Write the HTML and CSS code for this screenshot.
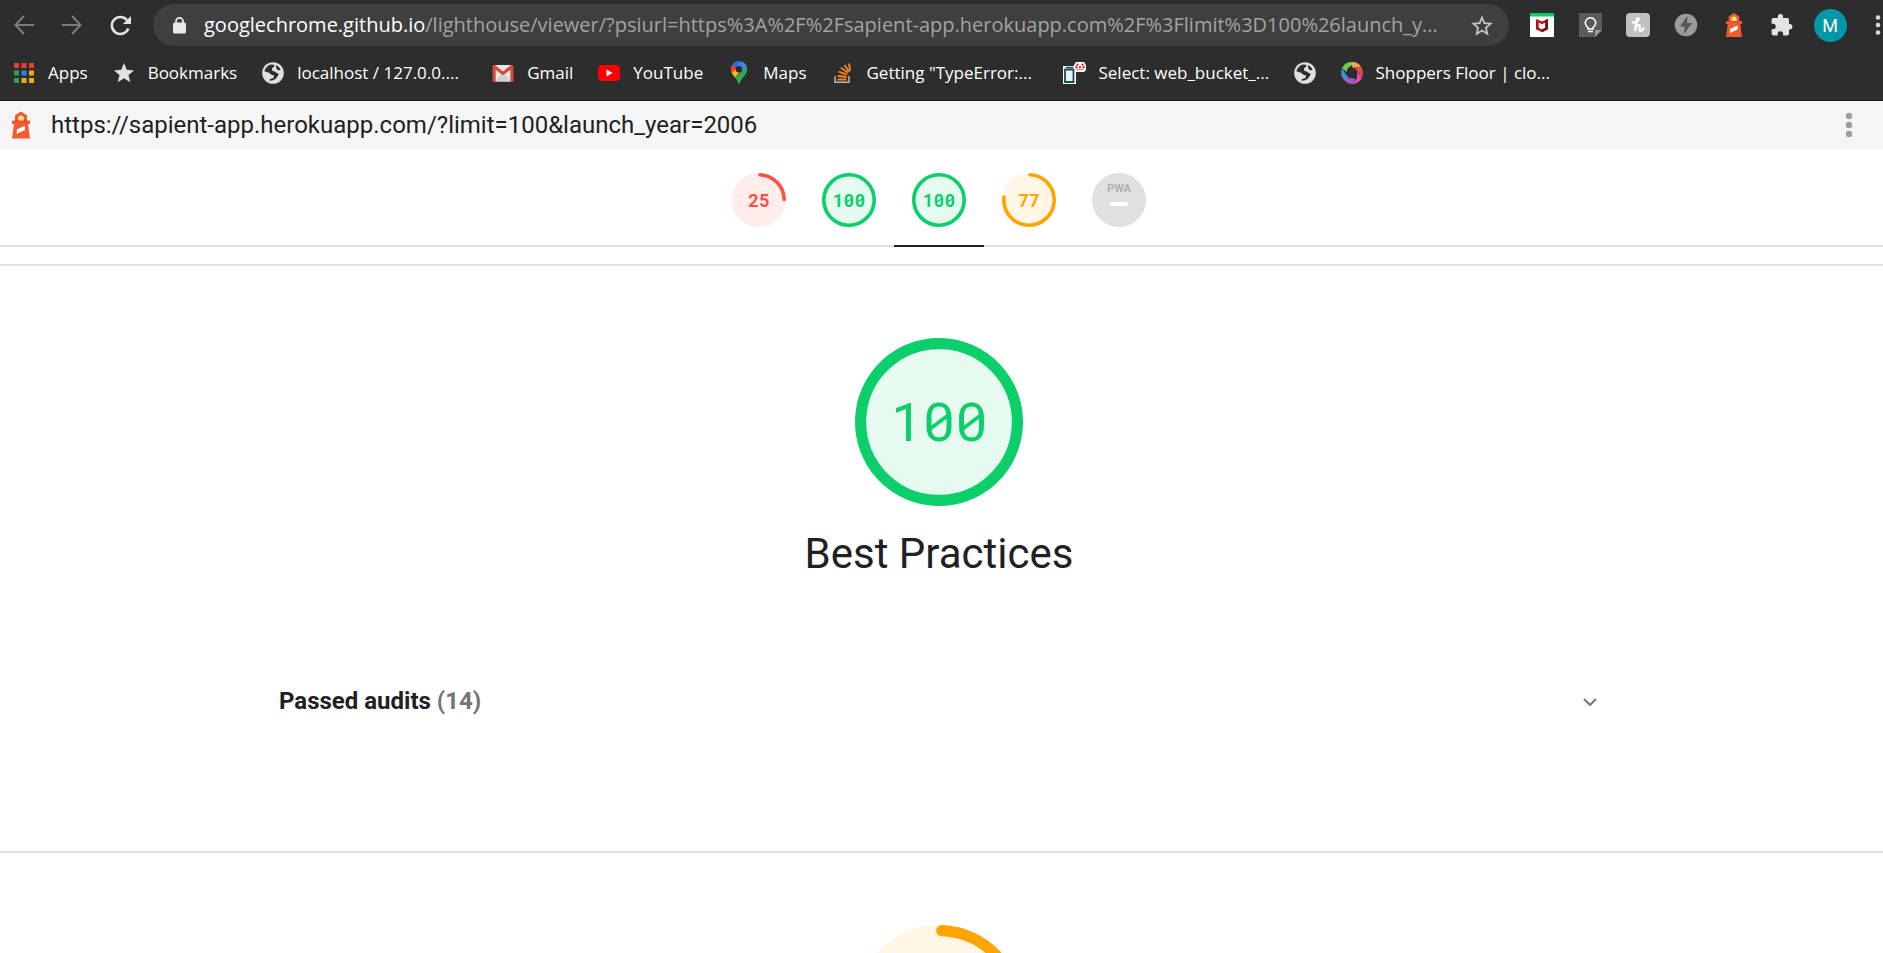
FILE: index.html
```html
<!DOCTYPE html>
<html lang="en">
<head>
<meta charset="utf-8">
<title>Lighthouse Report Viewer</title>
<link rel="stylesheet" href="styles.css">
</head>
<body>
<svg class="defs" aria-hidden="true">
  <symbol id="lighthouse" viewBox="0 0 18 27">
    <path fill="#f4592f" d="M9 0l6 3.8V9h3v3.4h-2L18 27H0l2-14.6H0V9h3V3.8z"/>
    <path fill="#e8431f" d="M3 8.8h12v1.2H3z"/>
    <path fill="#fde37a" d="M6 9V6.5C6 5 7.4 4 9 4s3 1 3 2.500V9z"/>
    <path fill="#fff" d="M5 17.800l8-3.600v4.300l-8.500 4z"/>
  </symbol>
  <symbol id="globe" viewBox="0 0 22 22">
    <circle cx="11" cy="11" r="10.800" fill="#dfe0e1"/>
    <path fill="#2d2d2d" d="M2.500 9.500C3 6 6 2.800 9.500 2.400l3 .6c-.3 1.800-1 2.600-2.400 2.900v2.400c0 .7 1 1 1.800 1 1.500 0 1.600 1.600 2.800 1.600 2 0 2.200 2 1 3.200-1 1-1.200 2.500-2.700 3.200-2 .9-4.500 1.800-6.200.9l2-1.500c2-.1 3-1 3.200-2.300.1-.9-.8-1.500-1.800-1.500-2 0-2.200-1.900-3.900-2.300C5 10.300 4 9.200 2.500 9.500z"/>
    <path fill="#2d2d2d" d="M14 3.300c2 .8 3.800 2.400 4.600 4.400-1.400 1-3 .8-3.600-.4-.5-1.200-1.400-1.900-1-4z"/>
  </symbol>
</svg>

<header class="browser">
  <div class="toolbar">
    <button class="slot dim" aria-label="Back"><svg width="20" height="20" viewBox="0 0 20 20"><path fill="none" stroke="currentColor" stroke-width="2" d="M20 10H1.500M10 1L1.500 10l8.500 9"/></svg></button>
    <button class="slot dim" aria-label="Forward"><svg width="20" height="20" viewBox="0 0 20 20"><path fill="none" stroke="currentColor" stroke-width="2" d="M0 10h18.500M10 1l8.500 9-8.500 9"/></svg></button>
    <button class="slot" aria-label="Reload"><svg width="21" height="21" viewBox="0 0 21 21"><path fill="none" stroke="currentColor" stroke-width="2.600" d="M17 5.200A8.500 8.500 0 1 0 18.300 13.500"/><path fill="currentColor" d="M21 1v8h-8z"/></svg></button>
    <div class="address">
      <svg class="lock" width="13" height="17" viewBox="0 0 13 17"><rect x="0" y="5.500" width="13" height="11" rx="1.500" fill="#e8e8e8"/><path fill="none" stroke="#e8e8e8" stroke-width="1.800" d="M3 6V4.200a3.500 3.400 0 0 1 7 0V6"/></svg>
      <div class="url" role="textbox" aria-label="Address" tabindex="0"><span class="host">googlechrome.github.io</span>/lighthouse/viewer/?psiurl=https%3A%2F%2Fsapient-app.herokuapp.com%2F%3Flimit%3D100%26launch_y...</div>
      <button class="star" aria-label="Bookmark this page"><svg width="22" height="21" viewBox="0 0 22 21"><path fill="none" stroke="#c4c4c4" stroke-width="1.800" d="M11 2.500l2.400 5.700 6.200.5-4.700 4.100 1.400 6-5.300-3.200-5.300 3.200 1.400-6L2.400 8.700l6.200-.5z"/></svg></button>
    </div>
    <button class="slot" aria-label="McAfee WebAdvisor"><svg width="24" height="24" viewBox="0 0 24 24"><path fill="#fff" d="M0 0h24v24H0z"/><path fill="#0dc96c" d="M0 0h24v3.500H0z"/><path fill="#b51217" d="M6 6l6 2.500L18 6v10.200l-6 3-6-3zM8.700 9.600v5.200l3.300 1.600 3.300-1.600V9.600L12 11.200z"/><path fill="#7d1116" d="M15.300 7.100L18 6v10.200l-6 3v-2.800l3.300-1.600z"/></svg></button>
    <button class="slot" aria-label="Google Keep"><svg width="24" height="24" viewBox="0 0 24 24"><path fill="#5b5b5b" d="M1 0h23v17l-7 7H1z"/><path fill="#9b9b9b" d="M17 17h7l-7 7z"/><path fill="none" stroke="#fff" stroke-width="1.500" d="M10 16v-1.500A5.200 5.200 0 1 1 15 14.500V16z"/><path stroke="#fff" stroke-width="1.500" d="M10 18.500h5"/></svg></button>
    <button class="slot" aria-label="Honey"><svg width="24" height="24" viewBox="0 0 24 24"><rect width="24" height="24" rx="4" fill="#c1c1c1"/><path fill="none" stroke="#fff" stroke-width="2.200" stroke-linecap="round" d="M6.500 9.300c2.500.8 6-.8 6.300-3.200.1-1.300-1.500-1.300-2 .2L9 18c.6-3 2-5.800 3.800-6 2.300-.2.200 3.800.7 5.300.5 1.400 3.300.4 4-2"/></svg></button>
    <button class="slot" aria-label="AMP Validator"><svg width="24" height="24" viewBox="0 0 24 24"><circle cx="12" cy="12" r="11.300" fill="#9a9a9a"/><path fill="#555" d="M13.500 3L6 13.500h4.800L9.800 21 18 10h-5z"/></svg></button>
    <button class="slot" aria-label="Lighthouse"><svg width="16" height="24"><use href="#lighthouse"/></svg></button>
    <button class="slot" aria-label="Extensions"><svg width="22" height="22" viewBox="0 0 22 22"><path fill="#e2e2e2" d="M18.700 10H18V5.800C18 4.700 17.200 4 16.200 4H12V2.700a2.600 2.600 0 0 0-5.200 0V4H2.500C1.300 4 .6 4.700.6 5.800v4H2a2.700 2.700 0 0 1 0 5.500H.6v4.300c0 1.100.8 1.900 1.900 1.900h4.200V20a2.700 2.700 0 0 1 5.400 0v1.500h4.100c1 0 1.800-.8 1.800-1.900v-4.200h.7a2.700 2.700 0 0 0 0-5.400z"/></svg></button>
    <button class="slot" aria-label="Profile"><span class="avatar">M</span></button>
    <button class="slot slot-end" aria-label="Customize and control"><svg width="10" height="22" viewBox="0 0 10 22"><g fill="#d8d8d8"><circle cx="5" cy="3.500" r="2.300"/><circle cx="5" cy="11" r="2.300"/><circle cx="5" cy="18.500" r="2.300"/></g></svg></button>
  </div>

  <nav class="bookmarks" aria-label="Bookmarks bar">
    <a href="#"><svg width="22" height="22" viewBox="0 0 22 22"><path fill="#ea3c34" d="M1 1h5v5H1zM8.500 1h5v5h-5zM16 1h5v5h-5z"/><path fill="#2fa058" d="M1 8.500h5v5H1zM1 16h5v5H1z"/><path fill="#1e88f0" d="M8.500 8.500h5v5h-5z"/><path fill="#f8a80c" d="M16 8.500h5v5h-5zM8.500 16h5v5h-5zM16 16h5v5h-5z"/></svg><span>Apps</span></a>
    <a href="#"><svg width="22" height="22" viewBox="0 0 22 22"><path fill="#e2e2e2" d="M11 1l2.700 6.800 7.300.6-5.500 4.700 1.800 7.100L11 16.300l-6.300 3.900 1.800-7.100L1 8.400l7.300-.6z"/></svg><span>Bookmarks</span></a>
    <a href="#"><svg width="22" height="22"><use href="#globe"/></svg><span class="long">localhost / 127.0.0....</span></a>
    <a href="#"><svg width="22" height="22" viewBox="0 0 22 22"><path fill="#e9e9e9" d="M2 3h18v16.500H2z"/><path fill="#d2d2d2" d="M3 19.500l6-7 2 2 2-2 6 7z"/><path fill="#d54b3d" d="M.5 4.500A1.500 1.500 0 0 1 2 3h1l8 6.500L19 3h1a1.500 1.500 0 0 1 1.500 1.500v15H18.300V7.800L11 13.500 3.700 7.800v11.700H.5z"/></svg><span>Gmail</span></a>
    <a href="#"><svg width="22" height="22" viewBox="0 0 22 22"><rect y="3" width="22" height="16" rx="4" fill="#f00"/><path fill="#fff" d="M8.500 7.500l6 3.500-6 3.500z"/></svg><span>YouTube</span></a>
    <a href="#"><svg width="22" height="24" viewBox="0 0 22 24"><path fill="#34a853" d="M11 24c-1-3-2-5-4-7.500L18.500 5c1 2 .9 5-.3 7.200C16 16.300 12.300 18.500 11 24z"/><path fill="#fbbc04" d="M7 16.500C5 14 3 11.700 3 8.500l6-2 4 3z"/><path fill="#ea4335" d="M4.500 3.600l5 4.200-5.800 4C2.700 9 2.800 5.800 4.500 3.600z"/><path fill="#1a73e8" d="M4.500 3.600A8 8 0 0 1 13.500.5L9 8z"/><path fill="#4285f4" d="M13.300.4a8 8 0 0 1 5.300 4.800L12.500 11 8.400 6z"/><circle cx="11" cy="8.200" r="3.200" fill="#2b2b2b"/></svg><span>Maps</span></a>
    <a href="#"><svg width="22" height="22" viewBox="0 0 22 22"><path fill="none" stroke="#b5b7ba" stroke-width="1.500" d="M3 14v6.200h14V14"/><g stroke="#f48024" stroke-width="1.900"><path d="M5.500 17.500h9M5.600 13.700l9 1.300M6.500 9.600l8.600 2.900M8.800 5.800l7.500 5M12.500 3l4.800 6.800M17 1.500l1.200 7"/></g></svg><span class="long">Getting "TypeError:...</span></a>
    <a href="#"><svg width="24" height="24" viewBox="0 0 24 24"><path fill="#fff" d="M1 5h13v18H1zM14 1h8l2 3v5l-2 2h-8l-2-3V4z"/><path fill="#e6f3f6" stroke="#164a5b" stroke-width="1.800" d="M3 8.500h8.500V21H3z"/><path stroke="#164a5b" stroke-width="1.500" d="M4 6.500h7"/><path fill="none" stroke="#ea1c24" stroke-width="1.800" stroke-dasharray="2.200 1" d="M16 2.800l-2 3 2 3.200M20 2.800l2 3-2 3.200M18 5v4"/></svg><span class="long">Select: web_bucket_...</span></a>
    <a href="#" aria-label="Untitled bookmark"><svg width="22" height="22"><use href="#globe"/></svg></a>
    <a href="#"><svg width="22" height="22" viewBox="-11 -11 22 22"><path fill="#f5a14c" d="M-2-11C3-12 7-9.500 9-6.500L1-5z"/><path fill="#ee4747" d="M9-6.500c2 3 2.500 7 1 11L4-3.500l-2-1.800z"/><path fill="#dd4fae" d="M10 4.500C8.500 8 5 10.800 1 11l4-6V-1z"/><path fill="#a65cc4" d="M1 11c-4 .2-7.500-1.500-9.500-5L0 5.300 3.500 6z"/><path fill="#3f92dc" d="M-8.500 6c-2.500-3-3-7-1.500-10.800L-5 3l3 2.500z"/><path fill="#6ccb4b" d="M-10-4.800C-8.500-8-6-10.500-2-11l3 2-6 5v3z"/><circle r="5" fill="#332a30"/></svg><span class="long">Shoppers Floor | clo...</span></a>
  </nav>
</header>

<div class="topbar">
  <svg class="logo" width="18" height="28"><use href="#lighthouse"/></svg>
  <a class="report-url" href="#">https://sapient-app.herokuapp.com/?limit=100&amp;launch_year=2006</a>
  <button class="more" aria-label="Report tools"><svg width="8" height="26" viewBox="0 0 8 26"><g fill="#9e9e9e"><circle cx="4" cy="4" r="3.200"/><circle cx="4" cy="13" r="3.200"/><circle cx="4" cy="22" r="3.200"/></g></svg></button>
</div>

<nav class="scores" aria-label="Categories">
  <a class="gauge fail" href="#performance"><svg viewBox="0 0 120 120"><circle class="base" cx="60" cy="60" r="60"/><circle class="arc" cx="60" cy="60" r="56" stroke-dasharray="84 352"/></svg><span>25</span></a>
  <a class="gauge pass" href="#accessibility"><svg viewBox="0 0 120 120"><circle class="base" cx="60" cy="60" r="59"/><circle class="arc" cx="60" cy="60" r="56"/></svg><span>100</span></a>
  <a class="gauge pass current" href="#best-practices"><svg viewBox="0 0 120 120"><circle class="base" cx="60" cy="60" r="59"/><circle class="arc" cx="60" cy="60" r="56"/></svg><span>100</span></a>
  <a class="gauge average" href="#seo"><svg viewBox="0 0 120 120"><circle class="base" cx="60" cy="60" r="60"/><circle class="arc" cx="60" cy="60" r="56" stroke-dasharray="267 352"/></svg><span>77</span></a>
  <a class="gauge" href="#pwa" aria-label="PWA"><svg viewBox="0 0 54 54"><circle cx="27" cy="27" r="27" fill="#e0e0e0"/><text class="pwa" x="27" y="19" text-anchor="middle">PWA</text><rect x="18" y="29" width="18" height="4" rx="2" fill="#fff"/></svg></a>
</nav>

<main>
  <section class="category" id="best-practices">
    <div class="gauge big pass"><svg viewBox="0 0 120 120"><circle class="base" cx="60" cy="60" r="59"/><circle class="arc" cx="60" cy="60" r="56"/></svg><span>100</span></div>
    <h1>Best Practices</h1>
    <details class="audits">
      <summary><span>Passed audits <span class="count">(14)</span></span><svg width="14" height="9" viewBox="0 0 14 9"><path fill="none" stroke="#757575" stroke-width="2" d="M1 2l6 6 6-6"/></svg></summary>
    </details>
  </section>
  <section class="category" id="seo">
    <div class="gauge big average"><svg viewBox="0 0 120 120"><circle class="base" cx="60" cy="60" r="60"/><circle class="arc" cx="60" cy="60" r="56" stroke-dasharray="267 352"/></svg></div>
  </section>
</main>
</body>
</html>
```

FILE: styles.css
```css
* { box-sizing: border-box; }

body {
  margin: 0;
  height: 100vh;
  overflow: hidden;
  background: #fff;
  color: #212121;
  font-family: Roboto, "Liberation Sans", sans-serif;
}

a { color: inherit; text-decoration: none; }
svg { display: block; flex: none; }

button {
  display: flex;
  align-items: center;
  justify-content: center;
  padding: 0;
  border: 0;
  background: none;
  color: inherit;
  font: inherit;
}

.defs { position: absolute; width: 0; height: 0; }

/* Browser frame */
.browser {
  padding-bottom: 4px;
  border-bottom: 1px solid #1c1c1c;
  background: #2d2d2d;
  color: #fff;
  font-family: "Open Sans", "Noto Sans", sans-serif;
}

.toolbar {
  display: flex;
  align-items: center;
  padding: 4px 0 3px;
}

.slot { flex: none; width: 48px; height: 42px; color: #e2e2e2; }
.slot.dim { color: #7c7c7c; }
.slot-end { width: 29px; justify-content: flex-end; }

.address {
  display: flex;
  flex: 1;
  align-items: center;
  min-width: 0;
  height: 42px;
  margin: 0 9px;
  padding: 0 16px 0 20px;
  border-radius: 21px;
  background: #3f3f3f;
}

.lock { margin-right: 18px; }

.url {
  flex: 1;
  min-width: 0;
  overflow: hidden;
  color: #a3a3a3;
  font-size: 20px;
  line-height: 28px;
  white-space: nowrap;
}

.host { color: #fff; }

.avatar {
  width: 33px;
  height: 33px;
  border-radius: 50%;
  background: #0097a7;
  color: #fff;
  font: 18px/33px Roboto, sans-serif;
}

.bookmarks {
  display: flex;
  gap: 25px;
  align-items: center;
  height: 47px;
  padding-left: 13px;
  font-size: 17px;
  line-height: 24px;
  white-space: nowrap;
}

.bookmarks a { display: flex; gap: 13px; align-items: center; }
.long { width: 170px; }

/* Report header */
.topbar {
  display: flex;
  align-items: center;
  height: 48px;
  padding: 0 30px 0 12px;
  background: #f5f5f5;
  font-size: 24px;
  line-height: 28px;
}

.report-url { flex: 1; margin-left: 21px; }

.scores {
  display: flex;
  justify-content: center;
  padding-right: 5px;
  border-bottom: 2px solid #e0e0e0;
}

.scores .gauge {
  width: 90px;
  height: 98px;
  margin-bottom: -2px;
  padding: 24px 18px 18px;
  border-bottom: 2px solid transparent;
}

.scores .current { border-bottom-color: #212121; }

.gauge {
  display: grid;
  font: bold 18px/54px "Roboto Mono", "DejaVu Sans Mono", monospace;
  text-align: center;
}

.gauge > * { grid-area: 1 / 1; }
.gauge svg { width: 54px; height: 54px; }
.gauge .base { fill: currentColor; fill-opacity: 0.1; }

.gauge .arc {
  fill: none;
  stroke: currentColor;
  stroke-width: 8;
  stroke-linecap: round;
  transform: rotate(-88deg);
  transform-origin: center;
}

.pass { color: #0cce6b; }
.average { color: #ffa400; }
.fail { color: #ff4e42; }

.pwa { fill: #b0b0b0; font: bold 11px Roboto, sans-serif; }

/* Categories */
main { padding-top: 17px; }

.category {
  display: flex;
  flex-direction: column;
  align-items: center;
  padding: 72px 5px 132px 0;
  border-top: 2px solid #e0e0e0;
}

.big {
  font-size: 54px;
  font-weight: normal;
  line-height: 164px;
}

.big svg { width: 168px; height: 168px; }

h1 {
  margin: 18px 0 99px;
  font-size: 42px;
  font-weight: normal;
  line-height: 60px;
}

.audits { width: 100%; max-width: 1320px; }

.audits summary {
  display: flex;
  align-items: center;
  justify-content: space-between;
  padding-right: 2px;
  font-size: 24px;
  font-weight: bold;
  line-height: 36px;
  list-style: none;
}

.count { color: #757575; }
```
